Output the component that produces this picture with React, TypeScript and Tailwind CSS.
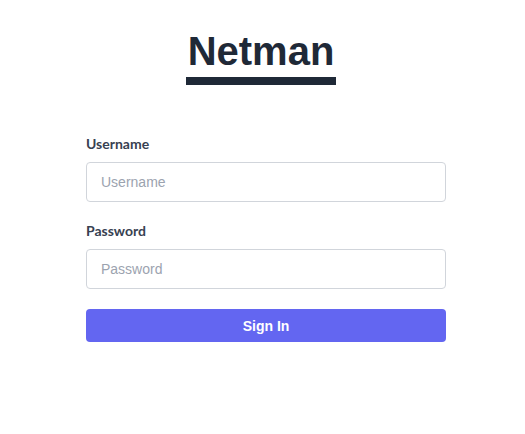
export default function App() {
  return (
    <div className="min-h-screen bg-white font-['Lato','Liberation_Sans',sans-serif]">
      <div className="flex flex-col items-center pt-[31px] pr-[3px]">
        <h1 className="text-[40px] leading-[40px] font-bold text-[#1f2937] font-['Liberation_Sans',Arial,sans-serif]">
          Netman
        </h1>
        <div className="mt-[6px] h-2 w-[150px] bg-[#1f2937]" />
      </div>

      <form className="ml-[86px] mt-[49px] w-[360px]" onSubmit={e => e.preventDefault()}>
        <div>
          <label className="block text-sm font-bold text-[#374151] mb-2">Username</label>
          <input
            type="text"
            placeholder="Username"
            className="block h-10 w-full rounded border border-[#d1d5db] px-[14px] text-sm text-[#374151] placeholder:text-[#9ca3af] font-['Liberation_Sans',Arial,sans-serif] outline-none"
          />
        </div>
        <div className="mt-[19px]">
          <label className="block text-sm font-bold text-[#374151] mb-2">Password</label>
          <input
            type="password"
            placeholder="Password"
            className="block h-10 w-full rounded border border-[#d1d5db] px-[14px] text-sm text-[#374151] placeholder:text-[#9ca3af] font-['Liberation_Sans',Arial,sans-serif] outline-none"
          />
        </div>
        <button
          type="submit"
          className="mt-5 h-[33px] w-full rounded bg-[#6366f1] text-sm font-bold text-white font-['Liberation_Sans',Arial,sans-serif]"
        >
          Sign In
        </button>
      </form>
    </div>
  );
}
